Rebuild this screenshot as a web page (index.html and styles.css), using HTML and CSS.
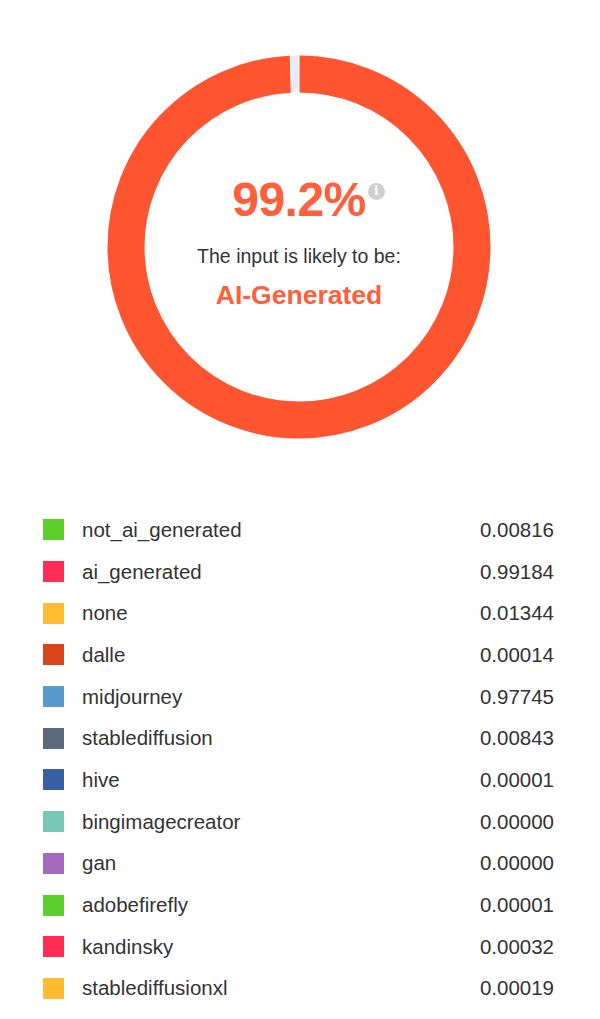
FILE: index.html
```html
<!DOCTYPE html>
<html lang="en">
<head>
    <meta charset="UTF-8">
    <meta name="viewport" content="width=device-width, initial-scale=1.0">
    <title>AI Detection Result</title>
    <link rel="stylesheet" href="styles.css">
</head>
<body>
    <div class="result">
        <div class="donut">
            <svg class="ring" width="384" height="384" viewBox="0 0 384 384">
                <circle cx="192" cy="192" r="173" fill="none" stroke="#e7edf8" stroke-width="37"/>
                <circle cx="192" cy="192" r="173" fill="none" stroke="#ff5430" stroke-width="37"
                        stroke-dasharray="1078.3 1087" transform="rotate(-90 192 192)"/>
                <line x1="192" y1="0" x2="192" y2="38" stroke="#fff" stroke-width="1"/>
                <line x1="183.3" y1="0.2" x2="184.2" y2="38.2" stroke="#fff" stroke-width="1"/>
            </svg>
            <div class="score">
                <div class="percent">
                    99.2%
                    <span class="info">i</span>
                </div>
                <p class="likely">The input is likely to be:</p>
                <p class="verdict">AI-Generated</p>
            </div>
        </div>
    </div>

    <ul class="legend">
        <li><span class="swatch" style="background:#5ccf2c"></span><span class="name">not_ai_generated</span><span class="value">0.00816</span></li>
        <li><span class="swatch" style="background:#ff2d55"></span><span class="name">ai_generated</span><span class="value">0.99184</span></li>
        <li><span class="swatch" style="background:#ffbc32"></span><span class="name">none</span><span class="value">0.01344</span></li>
        <li><span class="swatch" style="background:#d84518"></span><span class="name">dalle</span><span class="value">0.00014</span></li>
        <li><span class="swatch" style="background:#579ccd"></span><span class="name">midjourney</span><span class="value">0.97745</span></li>
        <li><span class="swatch" style="background:#5b6a7b"></span><span class="name">stablediffusion</span><span class="value">0.00843</span></li>
        <li><span class="swatch" style="background:#3661a7"></span><span class="name">hive</span><span class="value">0.00001</span></li>
        <li><span class="swatch" style="background:#76c7b6"></span><span class="name">bingimagecreator</span><span class="value">0.00000</span></li>
        <li><span class="swatch" style="background:#a56ac0"></span><span class="name">gan</span><span class="value">0.00000</span></li>
        <li><span class="swatch" style="background:#5ccf2c"></span><span class="name">adobefirefly</span><span class="value">0.00001</span></li>
        <li><span class="swatch" style="background:#ff2d55"></span><span class="name">kandinsky</span><span class="value">0.00032</span></li>
        <li><span class="swatch" style="background:#ffbc32"></span><span class="name">stablediffusionxl</span><span class="value">0.00019</span></li>
    </ul>
</body>
</html>
```

FILE: styles.css
```css
body {
    margin: 0;
    font-family: "Liberation Sans", Arial, sans-serif;
    background-color: #fff;
    color: #333;
}

/* Donut chart */
.result {
    display: flex;
    justify-content: center;
    padding: 55px 0 0 0;
}

.donut {
    position: relative;
    width: 384px;
    height: 384px;
    margin-left: -2px;
}

.ring {
    display: block;
}

.score {
    position: absolute;
    top: 0;
    left: 0;
    right: 0;
    bottom: 0;
    display: flex;
    flex-direction: column;
    align-items: center;
    padding-top: 118px;
    box-sizing: border-box;
}

.percent {
    position: relative;
    font-size: 48px;
    font-weight: bold;
    color: #ff5f3c;
    line-height: 54px;
    letter-spacing: -0.5px;
}

.info {
    position: absolute;
    top: 10px;
    right: -19px;
    width: 17px;
    height: 17px;
    border-radius: 50%;
    background-color: #cfcfcf;
    color: #fff;
    font-family: "DejaVu Serif", serif;
    font-size: 12px;
    font-weight: bold;
    line-height: 17px;
    text-align: center;
    letter-spacing: 0;
}

.likely {
    margin: 17px 0 0 0;
    font-size: 19.5px;
    line-height: 24px;
    color: #333;
}

.verdict {
    margin: 12px 0 0 0;
    font-size: 26.5px;
    font-weight: bold;
    line-height: 30px;
    color: #ff5f3c;
}

/* Legend */
.legend {
    list-style: none;
    margin: 0;
    padding: 70px 46px 0 43px;
}

.legend li {
    display: flex;
    align-items: center;
    height: 41.7px;
    font-size: 20.5px;
    color: #333;
}

.swatch {
    width: 21px;
    height: 21px;
    margin-right: 18px;
    flex-shrink: 0;
}

.name {
    flex: 1;
}

.value {
    text-align: right;
}
```
